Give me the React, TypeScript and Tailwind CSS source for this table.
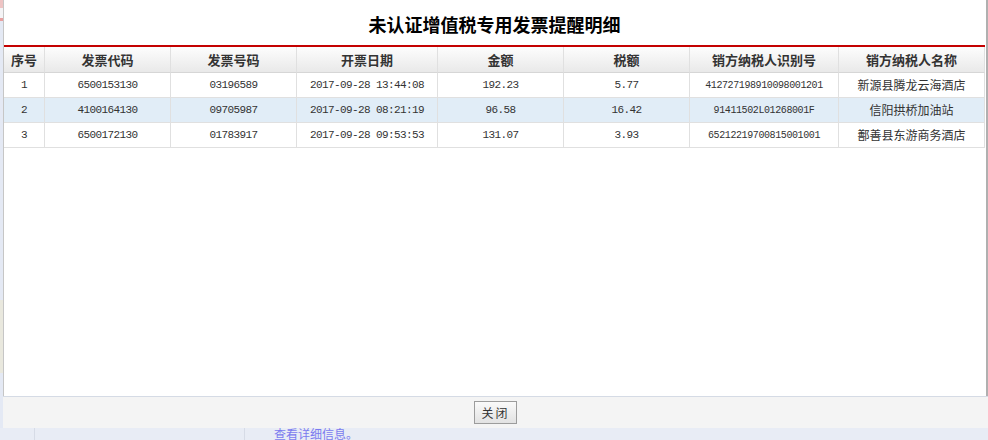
import React from "react";

// Column widths measured from the grid lines
const COLS = "grid-cols-[41px_126px_126px_141px_126px_126px_149px_146px]";

const HEADERS = ["序号", "发票代码", "发票号码", "开票日期", "金额", "税额", "销方纳税人识别号", "销方纳税人名称"];

interface Invoice {
  code: string;
  number: string;
  date: string;
  amount: string;
  tax: string;
  sellerId: string;
  sellerName: string;
}

const ROWS: Invoice[] = [
  {
    code: "6500153130",
    number: "03196589",
    date: "2017-09-28 13:44:08",
    amount: "192.23",
    tax: "5.77",
    sellerId: "412727198910098001201",
    sellerName: "新源县腾龙云海酒店",
  },
  {
    code: "4100164130",
    number: "09705987",
    date: "2017-09-28 08:21:19",
    amount: "96.58",
    tax: "16.42",
    sellerId: "91411502L01268001F",
    sellerName: "信阳拱桥加油站",
  },
  {
    code: "6500172130",
    number: "01783917",
    date: "2017-09-28 09:53:53",
    amount: "131.07",
    tax: "3.93",
    sellerId: "652122197008150010\u200b01".replace("\u200b", ""),
    sellerName: "鄯善县东游商务酒店",
  },
];

const cell = "flex items-center justify-center border-r border-b border-[#e0e0e0]";
const mono = "font-['Liberation_Mono',monospace] text-[11px] tracking-[-0.6px]";

function InvoiceTable() {
  return (
    <div className="flex flex-col">
      <div className={`grid ${COLS} h-[26px] bg-linear-to-b from-[#fdfdfd] to-[#e8e8e8]`}>
        {HEADERS.map((h) => (
          <div key={h} className={`${cell} border-b-[#d6d6d6] text-[13px] font-bold text-[#333]`}>
            {h}
          </div>
        ))}
      </div>
      {ROWS.map((r, i) => (
        <div
          key={r.code}
          className={`grid ${COLS} h-[25px] text-[#333] ${i === 1 ? "bg-[#e1edf7]" : "bg-white"}`}
        >
          <div className={`${cell} ${mono}`}>{i + 1}</div>
          <div className={`${cell} ${mono}`}>{r.code}</div>
          <div className={`${cell} ${mono}`}>{r.number}</div>
          <div className={`${cell} ${mono}`}>{r.date}</div>
          <div className={`${cell} ${mono}`}>{r.amount}</div>
          <div className={`${cell} ${mono}`}>{r.tax}</div>
          <div className={`${cell} font-['Liberation_Mono',monospace] text-[10px] tracking-[-0.4px]`}>
            {r.sellerId}
          </div>
          <div className={`${cell} text-[12px]`}>{r.sellerName}</div>
        </div>
      ))}
    </div>
  );
}

export default function App() {
  return (
    <div className="flex h-[440px] w-[988px] flex-col overflow-hidden bg-[#e8ecf5] font-['Noto_Sans_CJK_SC','Noto_Sans',sans-serif]">
      <div className="flex h-[428px]">
        {/* Page behind the dialog, left edge */}
        <div className="flex w-[3px] flex-col bg-[#e4e9f4]">
          <div className="h-[8px] bg-[#eec4c4]" />
          <div className="h-[10px] bg-[#f4f4f6]" />
          <div className="h-[3px] bg-[#e8a0a0]" />
          <div className="h-[279px]" />
          <div className="h-[73px] bg-[#e9e8de]" />
        </div>

        <div className="flex flex-1 flex-col">
          <div className="flex h-[396px]">
            <div className="flex w-[982px] flex-col border-l border-[#c6c6c6] bg-white">
              <div className="flex h-[45px] items-center justify-center pt-[4px] text-[18px] font-bold text-black">
                未认证增值税专用发票提醒明细
              </div>
              <div className="h-[2px] bg-[#c40000]" />
              <InvoiceTable />
            </div>
            <div className="flex w-[3px]">
              <div className="w-[1px] bg-white" />
              <div className="w-[2px] bg-[#b0b0b0]" />
            </div>
          </div>

          {/* Footer with close button */}
          <div className="flex h-[32px] justify-center border-t border-[#d5dbe5] bg-[#f4f4f4] pt-[4px]">
            <button className="h-[23px] w-[43px] border border-[#9c9c9c] bg-linear-to-b from-[#fafafa] to-[#e2e2e2] text-[12px] tracking-[2px] text-[#333]">
              关闭
            </button>
          </div>
        </div>
      </div>

      {/* Page behind the dialog, bottom */}
      <div className="flex h-[12px]">
        <div className="w-[35px] border-r border-[#d6dbe6]" />
        <div className="w-[210px] border-r border-[#d6dbe6]" />
        <div className="pl-[29px] text-[12px] leading-[12px] text-[#7b7bef]">查看详细信息。</div>
      </div>
    </div>
  );
}
